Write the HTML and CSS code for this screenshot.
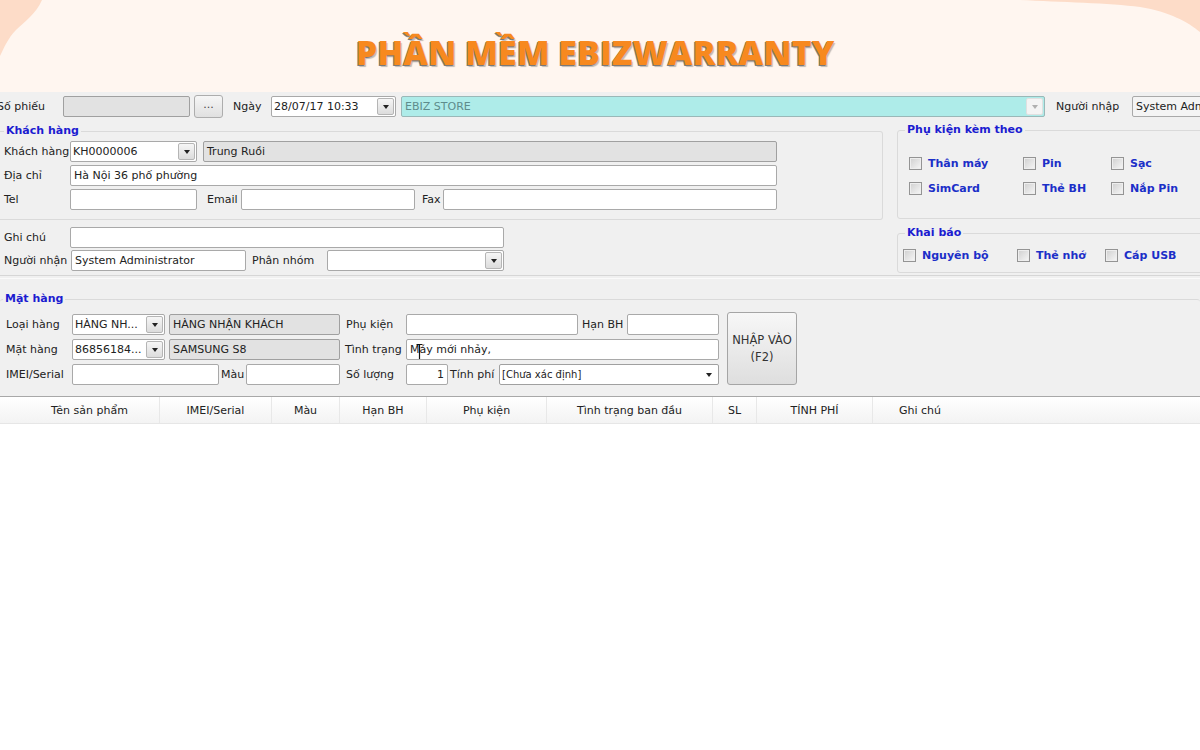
FILE: index.html
```html
<!DOCTYPE html>
<html>
    <head>
        <meta charset="utf-8">
        <title>Phần mềm eBizWarranty</title>
        <link rel="stylesheet" href="styles.css">
    </head>
    <body>
        <!-- banner -->
        <div class="banner">
            <svg class="blob blob-left" width="60" height="70" viewBox="0 0 60 70"><path d="M0 0 L42 0 C36 14 24 22 16 30 C8 38 4 48 0 56 Z" fill="#fddcc8"/></svg>
            <svg class="blob blob-right" width="180" height="40" viewBox="0 0 180 40"><path d="M0 0 L180 0 L180 32 C168 22 150 12 120 7 C90 3 40 2 0 0 Z" fill="#fddcc8"/></svg>
            <h1 class="banner-title">PHẦN MỀM EBIZWARRANTY</h1>
        </div>

        <!-- form -->
        <div class="form">
            <div class="toprow">
                <span class="lbl lbl-sophieu">Số phiếu</span>
                <span class="tb ro w127"></span>
                <span class="btn-dots">...</span>
                <span class="lbl lbl-ngay">Ngày</span>
                <span class="combo w125"><span class="combo-text">28/07/17 10:33</span><span class="arrow"></span></span>
                <span class="combo combo-store"><span class="combo-text">EBIZ STORE</span><span class="arrow arrow-off"></span></span>
                <span class="lbl lbl-nguoinhap">Người nhập</span>
                <span class="tb tb-nguoinhap">System Administrator</span>
            </div>

            <div class="mid">
                <div class="mid-left">
                    <fieldset class="group grp-kh">
                        <legend class="grp-title">Khách hàng</legend>
                        <div class="row">
                            <span class="lbl w66">Khách hàng</span>
                            <span class="combo w127"><span class="combo-text">KH0000006</span><span class="arrow"></span></span>
                            <span class="tb ro w574 ml6">Trung Ruồi</span>
                        </div>
                        <div class="row">
                            <span class="lbl w66">Địa chỉ</span>
                            <span class="tb w707">Hà Nội 36 phố phường</span>
                        </div>
                        <div class="row">
                            <span class="lbl w66">Tel</span>
                            <span class="tb w127"></span>
                            <span class="lbl w34 ml10">Email</span>
                            <span class="tb w174"></span>
                            <span class="lbl w21 ml7">Fax</span>
                            <span class="tb w334"></span>
                        </div>
                    </fieldset>

                    <div class="notes">
                        <div class="row">
                            <span class="lbl w66">Ghi chú</span>
                            <span class="tb w434"></span>
                        </div>
                        <div class="row">
                            <span class="lbl w67">Người nhận</span>
                            <span class="tb w175">System Administrator</span>
                            <span class="lbl w75 ml6">Phân nhóm</span>
                            <span class="combo w177"><span class="combo-text"></span><span class="arrow"></span></span>
                        </div>
                    </div>
                </div>

                <div class="mid-right">
                    <fieldset class="group grp-pk">
                        <legend class="grp-title">Phụ kiện kèm theo</legend>
                        <div class="chk-row">
                            <label class="chk-item w114"><span class="chk"></span>Thân máy</label>
                            <label class="chk-item w88"><span class="chk"></span>Pin</label>
                            <label class="chk-item"><span class="chk"></span>Sạc</label>
                        </div>
                        <div class="chk-row">
                            <label class="chk-item w114"><span class="chk"></span>SimCard</label>
                            <label class="chk-item w88"><span class="chk"></span>Thẻ BH</label>
                            <label class="chk-item"><span class="chk"></span>Nắp Pin</label>
                        </div>
                    </fieldset>
                    <fieldset class="group grp-kb">
                        <legend class="grp-title">Khai báo</legend>
                        <div class="chk-row chk-row-kb">
                            <label class="chk-item w114"><span class="chk"></span>Nguyên bộ</label>
                            <label class="chk-item w88"><span class="chk"></span>Thẻ nhớ</label>
                            <label class="chk-item"><span class="chk"></span>Cáp USB</label>
                        </div>
                    </fieldset>
                </div>
            </div>

            <div class="sep"></div>

            <fieldset class="group grp-mh">
                <legend class="grp-title">Mặt hàng</legend>
                <div class="mh-body">
                    <div class="mh-rows">
                        <div class="row">
                            <span class="lbl w66">Loại hàng</span>
                            <span class="combo w93"><span class="combo-text">HÀNG NH...</span><span class="arrow"></span></span>
                            <span class="tb ro w171 ml4">HÀNG NHẬN KHÁCH</span>
                            <span class="lbl w60 ml6">Phụ kiện</span>
                            <span class="tb w172"></span>
                            <span class="lbl w45 ml4">Hạn BH</span>
                            <span class="tb w92"></span>
                        </div>
                        <div class="row">
                            <span class="lbl w66">Mặt hàng</span>
                            <span class="combo w93"><span class="combo-text">86856184...</span><span class="arrow"></span></span>
                            <span class="tb ro w171 ml4">SAMSUNG S8</span>
                            <span class="lbl w61 ml5">Tình trạng</span>
                            <span class="tb tb-cursor w313">Máy mới nhảy,<svg class="ibeam" width="7" height="17" viewBox="0 0 7 17"><path d="M0.5 0.5 H3.5 M3.5 0.5 H6.5 M3.5 0.5 V16.5 M0.5 16.5 H6.5" stroke="#111" stroke-width="1.2" fill="none"/></svg></span>
                        </div>
                        <div class="row">
                            <span class="lbl w66">IMEI/Serial</span>
                            <span class="tb w147"></span>
                            <span class="lbl w25 ml2">Màu</span>
                            <span class="tb w94"></span>
                            <span class="lbl w60 ml6">Số lượng</span>
                            <span class="tb tb-num w42">1</span>
                            <span class="lbl w49 ml2">Tính phí</span>
                            <span class="select w220"><span class="select-text">[Chưa xác định]</span><span class="select-arrow"></span></span>
                        </div>
                    </div>
                    <div class="btn-add">NHẬP VÀO<br>(F2)</div>
                </div>
            </fieldset>
        </div>

        <!-- grid header -->
        <div class="grid-head">
            <span class="col c-first"></span>
            <span class="col c-ten">Tên sản phẩm</span>
            <span class="col c-imei">IMEI/Serial</span>
            <span class="col c-mau">Màu</span>
            <span class="col c-han">Hạn BH</span>
            <span class="col c-pk">Phụ kiện</span>
            <span class="col c-tt">Tình trạng ban đầu</span>
            <span class="col c-sl">SL</span>
            <span class="col c-phi">TÍNH PHÍ</span>
            <span class="col c-gc">Ghi chú</span>
        </div>
    </body>
</html>
```

FILE: styles.css
```css
*{
    margin: 0px;
    padding: 0px;
    box-sizing: border-box;
}
body{
    width: 1200px;
    height: 750px;
    overflow: hidden;
    background-color: #fff;
    font-family: "DejaVu Sans", "Noto Sans", sans-serif;
    font-size: 11px;
    color: #222;
}

/* banner */
.banner{
    position: relative;
    height: 92px;
    background-color: #fff6f0;
    display: flex;
    align-items: center;
    justify-content: center;
    padding-top: 12px;
    padding-right: 10px;
    overflow: hidden;
}
.blob{
    position: absolute;
    top: 0px;
}
.blob-left{
    left: 0px;
}
.blob-right{
    right: 0px;
}
.banner-title{
    position: relative;
    font-family: "Open Sans", "Liberation Sans", sans-serif;
    font-weight: 800;
    font-size: 34px;
    letter-spacing: 0px;
    color: #f7891f;
    text-shadow: -1px 1px 0 #7a7a7a, 1px 2px 1px rgba(0,0,0,0.25);
}

/* form */
.form{
    background-color: #f0f0f0;
    overflow: hidden;
    height: 304px;
}
.toprow{
    display: flex;
    align-items: center;
    height: 21px;
    margin-top: 4px;
    margin-bottom: 7px;
    white-space: nowrap;
}
.row{
    display: flex;
    align-items: center;
    height: 21px;
    margin-bottom: 3px;
    white-space: nowrap;
}
.lbl{
    flex: none;
    color: #222;
}
.lbl-sophieu{
    margin-left: -3px;
    width: 66px;
}
.lbl-ngay{
    margin-left: 10px;
    width: 38px;
}
.lbl-nguoinhap{
    margin-left: 11px;
    width: 76px;
}

/* textbox */
.tb{
    flex: none;
    display: block;
    height: 21px;
    line-height: 19px;
    padding: 0px 3px;
    border: 1px solid #a9a9a9;
    border-radius: 2px;
    background-color: #fff;
    overflow: hidden;
    white-space: nowrap;
}
.tb.ro{
    background-color: #e2e2e2;
    border-color: #a0a0a0;
}
.tb-nguoinhap{
    width: 90px;
    background-color: #f4f4f4;
}
.tb-num{
    text-align: right;
}
.tb-cursor{
    position: relative;
}
.ibeam{
    position: absolute;
    left: 9px;
    top: 4px;
}

/* combo */
.combo{
    flex: none;
    display: flex;
    height: 21px;
    border: 1px solid #a9a9a9;
    border-radius: 2px;
    background-color: #fff;
}
.combo-text{
    flex: 1;
    padding: 0px 2px;
    line-height: 19px;
    overflow: hidden;
}
.arrow{
    flex: none;
    width: 17px;
    margin: 1px;
    border: 1px solid #b5b5b5;
    border-radius: 2px;
    background: linear-gradient(#f6f6f6, #dcdcdc);
    display: flex;
    align-items: center;
    justify-content: center;
}
.arrow::after{
    content: "";
    border-top: 4px solid #222;
    border-left: 3px solid transparent;
    border-right: 3px solid transparent;
}
.combo-store{
    width: 644px;
    margin-left: 5px;
    background-color: #aeece9;
    border-color: #9ab8b8;
}
.combo-store .combo-text{
    color: #5e8c8c;
    padding-left: 3px;
}
.arrow-off{
    border-color: #e0e0e0;
    background: #f4f4f4;
}
.arrow-off::after{
    border-top-color: #b0b0b0;
}

/* select */
.select{
    flex: none;
    display: flex;
    align-items: center;
    height: 21px;
    border: 1px solid #a0a0a0;
    border-radius: 2px;
    background-color: #fff;
}
.select-text{
    flex: 1;
    padding-left: 2px;
    font-size: 10px;
}
.select-arrow{
    margin-right: 6px;
    border-top: 4px solid #222;
    border-left: 3px solid transparent;
    border-right: 3px solid transparent;
}

/* buttons */
.btn-dots{
    flex: none;
    width: 29px;
    height: 23px;
    margin-left: 4px;
    border: 1px solid #adadad;
    border-radius: 3px;
    background: linear-gradient(#f6f6f6, #e0e0e0);
    text-align: center;
    line-height: 17px;
    color: #444;
}
.btn-add{
    flex: none;
    width: 70px;
    height: 73px;
    margin-left: 8px;
    margin-top: -2px;
    border: 1px solid #a5a5a5;
    border-radius: 3px;
    background: linear-gradient(#f7f7f7, #dedede);
    display: flex;
    align-items: center;
    justify-content: center;
    text-align: center;
    font-size: 11.5px;
    line-height: 17px;
    color: #333;
}

/* widths */
.w21{ width: 21px; }
.w25{ width: 25px; }
.w34{ width: 34px; }
.w42{ width: 42px; }
.w45{ width: 45px; }
.w49{ width: 49px; }
.w60{ width: 60px; }
.w61{ width: 61px; }
.w66{ width: 66px; }
.w67{ width: 67px; }
.w75{ width: 75px; }
.w88{ width: 88px; }
.w92{ width: 92px; }
.w93{ width: 93px; }
.w94{ width: 94px; }
.w114{ width: 114px; }
.w125{ width: 125px; }
.w127{ width: 127px; }
.w147{ width: 147px; }
.w171{ width: 171px; }
.w172{ width: 172px; }
.w174{ width: 174px; }
.w175{ width: 175px; }
.w177{ width: 177px; }
.w220{ width: 220px; }
.w313{ width: 313px; }
.w334{ width: 334px; }
.w434{ width: 434px; }
.w574{ width: 574px; }
.w707{ width: 707px; }
.ml2{ margin-left: 2px; }
.ml4{ margin-left: 4px; }
.ml5{ margin-left: 5px; }
.ml6{ margin-left: 6px; }
.ml7{ margin-left: 7px; }
.ml10{ margin-left: 10px; }

/* group boxes */
.group{
    border: 1px solid #dadada;
    border-radius: 3px;
}
.grp-title{
    padding: 0px 2px;
    line-height: 14px;
    font-weight: bold;
    color: #1c1cd0;
}
.mid{
    display: flex;
}
.mid-left{
    flex: none;
    width: 883px;
}
.mid-right{
    flex: none;
    width: 320px;
    margin-left: 14px;
    margin-top: -1px;
}
.grp-kh{
    border-left: none;
    border-radius: 0px 3px 3px 0px;
    padding: 3px 0px 6px 4px;
}
.notes{
    margin-top: 7px;
    padding-left: 4px;
}
.notes .row{
    margin-bottom: 2px;
}
.grp-pk{
    padding: 16px 0px 15px 7px;
}
.grp-kb{
    margin-top: 7px;
    padding: 5px 0px 7px 7px;
}
.chk-row{
    display: flex;
    align-items: center;
    height: 20px;
    margin-bottom: 5px;
    padding-left: 4px;
}
.chk-row-kb{
    padding-left: 0px;
    margin-left: -2px;
    margin-bottom: 0px;
}
.chk-item{
    flex: none;
    display: flex;
    align-items: center;
    font-weight: bold;
    color: #1c2fc8;
}
.chk{
    width: 13px;
    height: 13px;
    margin-right: 6px;
    border: 1px solid #949494;
    background: linear-gradient(135deg, #cfcfcf, #f7f7f7);
    box-shadow: inset 0 0 0 1px #eeeeee;
}

.sep{
    margin-top: 2px;
    height: 4px;
    border-top: 1px solid #d6d6d6;
    border-bottom: 1px solid #fafafa;
}

.grp-mh{
    margin-top: 13px;
    border-left: none;
    border-right: none;
    border-bottom: none;
    padding: 8px 0px 0px 3px;
}
.mh-body{
    display: flex;
    align-items: flex-start;
    padding-left: 3px;
}
.mh-rows .row{
    margin-bottom: 4px;
}

/* grid header */
.grid-head{
    display: flex;
    height: 28px;
    border-top: 1px solid #a8a8a8;
    background: linear-gradient(#ffffff, #f3f3f3);
    border-bottom: 1px solid #e6e6e6;
    font-size: 11px;
    color: #222;
}
.col{
    flex: none;
    display: flex;
    align-items: center;
    justify-content: center;
    border-right: 1px solid #e8e8e8;
}
.c-first{ width: 20px; border-right: none; }
.c-ten{ width: 140px; }
.c-imei{ width: 112px; }
.c-mau{ width: 68px; }
.c-han{ width: 87px; }
.c-pk{ width: 120px; }
.c-tt{ width: 166px; }
.c-sl{ width: 44px; }
.c-phi{ width: 116px; }
.c-gc{ width: 94px; border-right: none; }
```
